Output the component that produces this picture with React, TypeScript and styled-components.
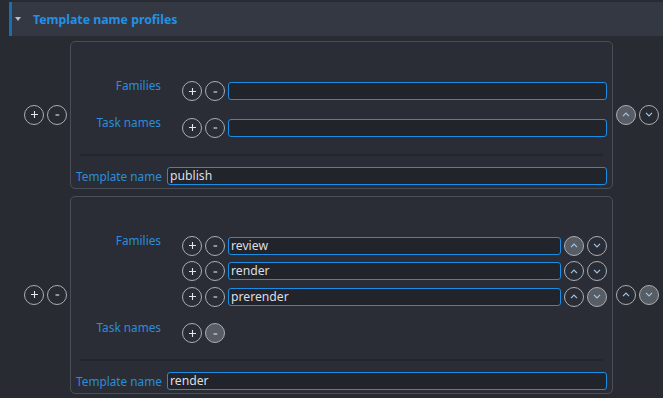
import styled, { createGlobalStyle } from "styled-components";

const GlobalStyle = createGlobalStyle`
    html, body {
        margin: 0;
        padding: 0;
        background: #282b32;
    }
    body {
        font-family: "Noto Sans", "DejaVu Sans", sans-serif;
        width: 663px;
        height: 398px;
        overflow: hidden;
    }
`;

const Page = styled.div`
    padding: 2px 0 0 9px;
    display: flex;
    flex-direction: column;
    gap: 5px;
`;

const Header = styled.div`
    height: 34px;
    background: #343842;
    border-left: 3px solid #1a6fb4;
    display: flex;
    align-items: center;
    padding-left: 3px;
    gap: 12px;
`;

const Caret = styled.span`
    width: 0;
    height: 0;
    border-left: 3.5px solid transparent;
    border-right: 3.5px solid transparent;
    border-top: 4px solid #b9bdc5;
`;

const Title = styled.span`
    color: #2490e4;
    font-weight: 700;
    font-size: 12.3px;
`;

const ItemList = styled.div`
    margin-left: 15px;
    margin-right: 4px;
    display: flex;
    flex-direction: column;
    gap: 7px;
`;

const ItemRow = styled.div`
    display: flex;
    align-items: center;
    gap: 3px;
`;

const Card = styled.div`
    flex: 1;
    border: 1px solid #4a4e57;
    border-radius: 5px;
    background: #2a2d36;
    padding: 39px 5px 3px 5px;
    display: flex;
    flex-direction: column;
`;

const FormGrid = styled.div`
    display: grid;
    grid-template-columns: 85px 1fr;
    column-gap: 6px;
    row-gap: 16.5px;
`;

const Label = styled.div<{ $top?: boolean }>`
    color: #2a8ddb;
    font-size: 11.8px;
    line-height: 16px;
    text-align: right;
    white-space: nowrap;
    align-self: ${(p) => (p.$top ? "start" : "center")};
    margin-top: ${(p) => (p.$top ? "-4px" : "0")};
`;

const ListBox = styled.div`
    padding-left: 15px;
    display: flex;
    flex-direction: column;
    gap: 5.5px;
`;

const ListRow = styled.div`
    display: flex;
    align-items: center;
    gap: 3px;
    height: 20px;
`;

const RoundButton = styled.button<{ $disabled?: boolean }>`
    box-sizing: border-box;
    width: 20px;
    height: 20px;
    flex: none;
    border-radius: 50%;
    border: 1.5px solid #a9adb4;
    background: ${(p) => (p.$disabled ? "#585c64" : "transparent")};
    padding: 0;
    display: flex;
    align-items: center;
    justify-content: center;
`;

const Field = styled.div`
    box-sizing: border-box;
    flex: 1;
    height: 18px;
    border: 1px solid #1c8de4;
    border-radius: 3px;
    background: #21242b;
    color: #dcdee2;
    font-size: 12.2px;
    line-height: 16px;
    padding-left: 2px;
    white-space: nowrap;
    overflow: hidden;
`;

const Separator = styled.div`
    height: 2px;
    background: #22252c;
    margin: 16px 4px 11px;
`;

const TemplateRow = styled.div`
    display: grid;
    grid-template-columns: 85px 1fr;
    column-gap: 6px;
    align-items: center;
`;

function Chevron({ up }: { up?: boolean }) {
    return (
        <svg width="8" height="5" viewBox="0 0 8 5">
            <path
                d={up ? "M1 4.2 L4 1.2 L7 4.2" : "M1 0.8 L4 3.8 L7 0.8"}
                fill="none"
                stroke="#9fc6ea"
                strokeWidth="1.2"
            />
        </svg>
    );
}

function PlusIcon() {
    return (
        <svg width="9" height="9" viewBox="0 0 9 9">
            <path d="M4.5 1 V8 M1 4.5 H8" stroke="#e2e5ea" strokeWidth="1.1" />
        </svg>
    );
}

function MinusIcon() {
    return (
        <svg width="9" height="9" viewBox="0 0 9 9">
            <path d="M2.5 5 H6.2" stroke="#e2e5ea" strokeWidth="1.1" />
        </svg>
    );
}

function AddRemove({ removeDisabled }: { removeDisabled?: boolean }) {
    return (
        <>
            <RoundButton>
                <PlusIcon />
            </RoundButton>
            <RoundButton $disabled={removeDisabled}>
                <MinusIcon />
            </RoundButton>
        </>
    );
}

function UpDown({ first, last }: { first?: boolean; last?: boolean }) {
    return (
        <>
            <RoundButton $disabled={first}>
                <Chevron up />
            </RoundButton>
            <RoundButton $disabled={last}>
                <Chevron />
            </RoundButton>
        </>
    );
}

type Profile = {
    families: string[];
    tasks: string[];
    template: string;
};

const profiles: Profile[] = [
    { families: [], tasks: [], template: "publish" },
    { families: ["review", "render", "prerender"], tasks: [], template: "render" },
];

function ValueList({ items }: { items: string[] }) {
    if (items.length === 0) {
        return (
            <ListBox>
                <ListRow>
                    <AddRemove />
                    <Field />
                </ListRow>
            </ListBox>
        );
    }
    return (
        <ListBox>
            {items.map((item, i) => (
                <ListRow key={item}>
                    <AddRemove />
                    <Field>{item}</Field>
                    <UpDown first={i === 0} last={i === items.length - 1} />
                </ListRow>
            ))}
        </ListBox>
    );
}

function ProfileCard({ profile, index }: { profile: Profile; index: number }) {
    const hasFamilies = profile.families.length > 0;
    return (
        <ItemRow>
            <AddRemove />
            <Card>
                <FormGrid>
                    <Label $top>Families</Label>
                    <ValueList items={profile.families} />
                    <Label $top>Task names</Label>
                    {hasFamilies ? (
                        <ListBox>
                            <ListRow>
                                <AddRemove removeDisabled />
                            </ListRow>
                        </ListBox>
                    ) : (
                        <ValueList items={profile.tasks} />
                    )}
                </FormGrid>
                <Separator />
                <TemplateRow>
                    <Label>Template name</Label>
                    <Field>{profile.template}</Field>
                </TemplateRow>
            </Card>
            <UpDown first={index === 0} last={index === profiles.length - 1} />
        </ItemRow>
    );
}

export default function App() {
    return (
        <>
            <GlobalStyle />
            <Page>
                <Header>
                    <Caret />
                    <Title>Template name profiles</Title>
                </Header>
                <ItemList>
                    {profiles.map((p, i) => (
                        <ProfileCard key={p.template} profile={p} index={i} />
                    ))}
                </ItemList>
            </Page>
        </>
    );
}
